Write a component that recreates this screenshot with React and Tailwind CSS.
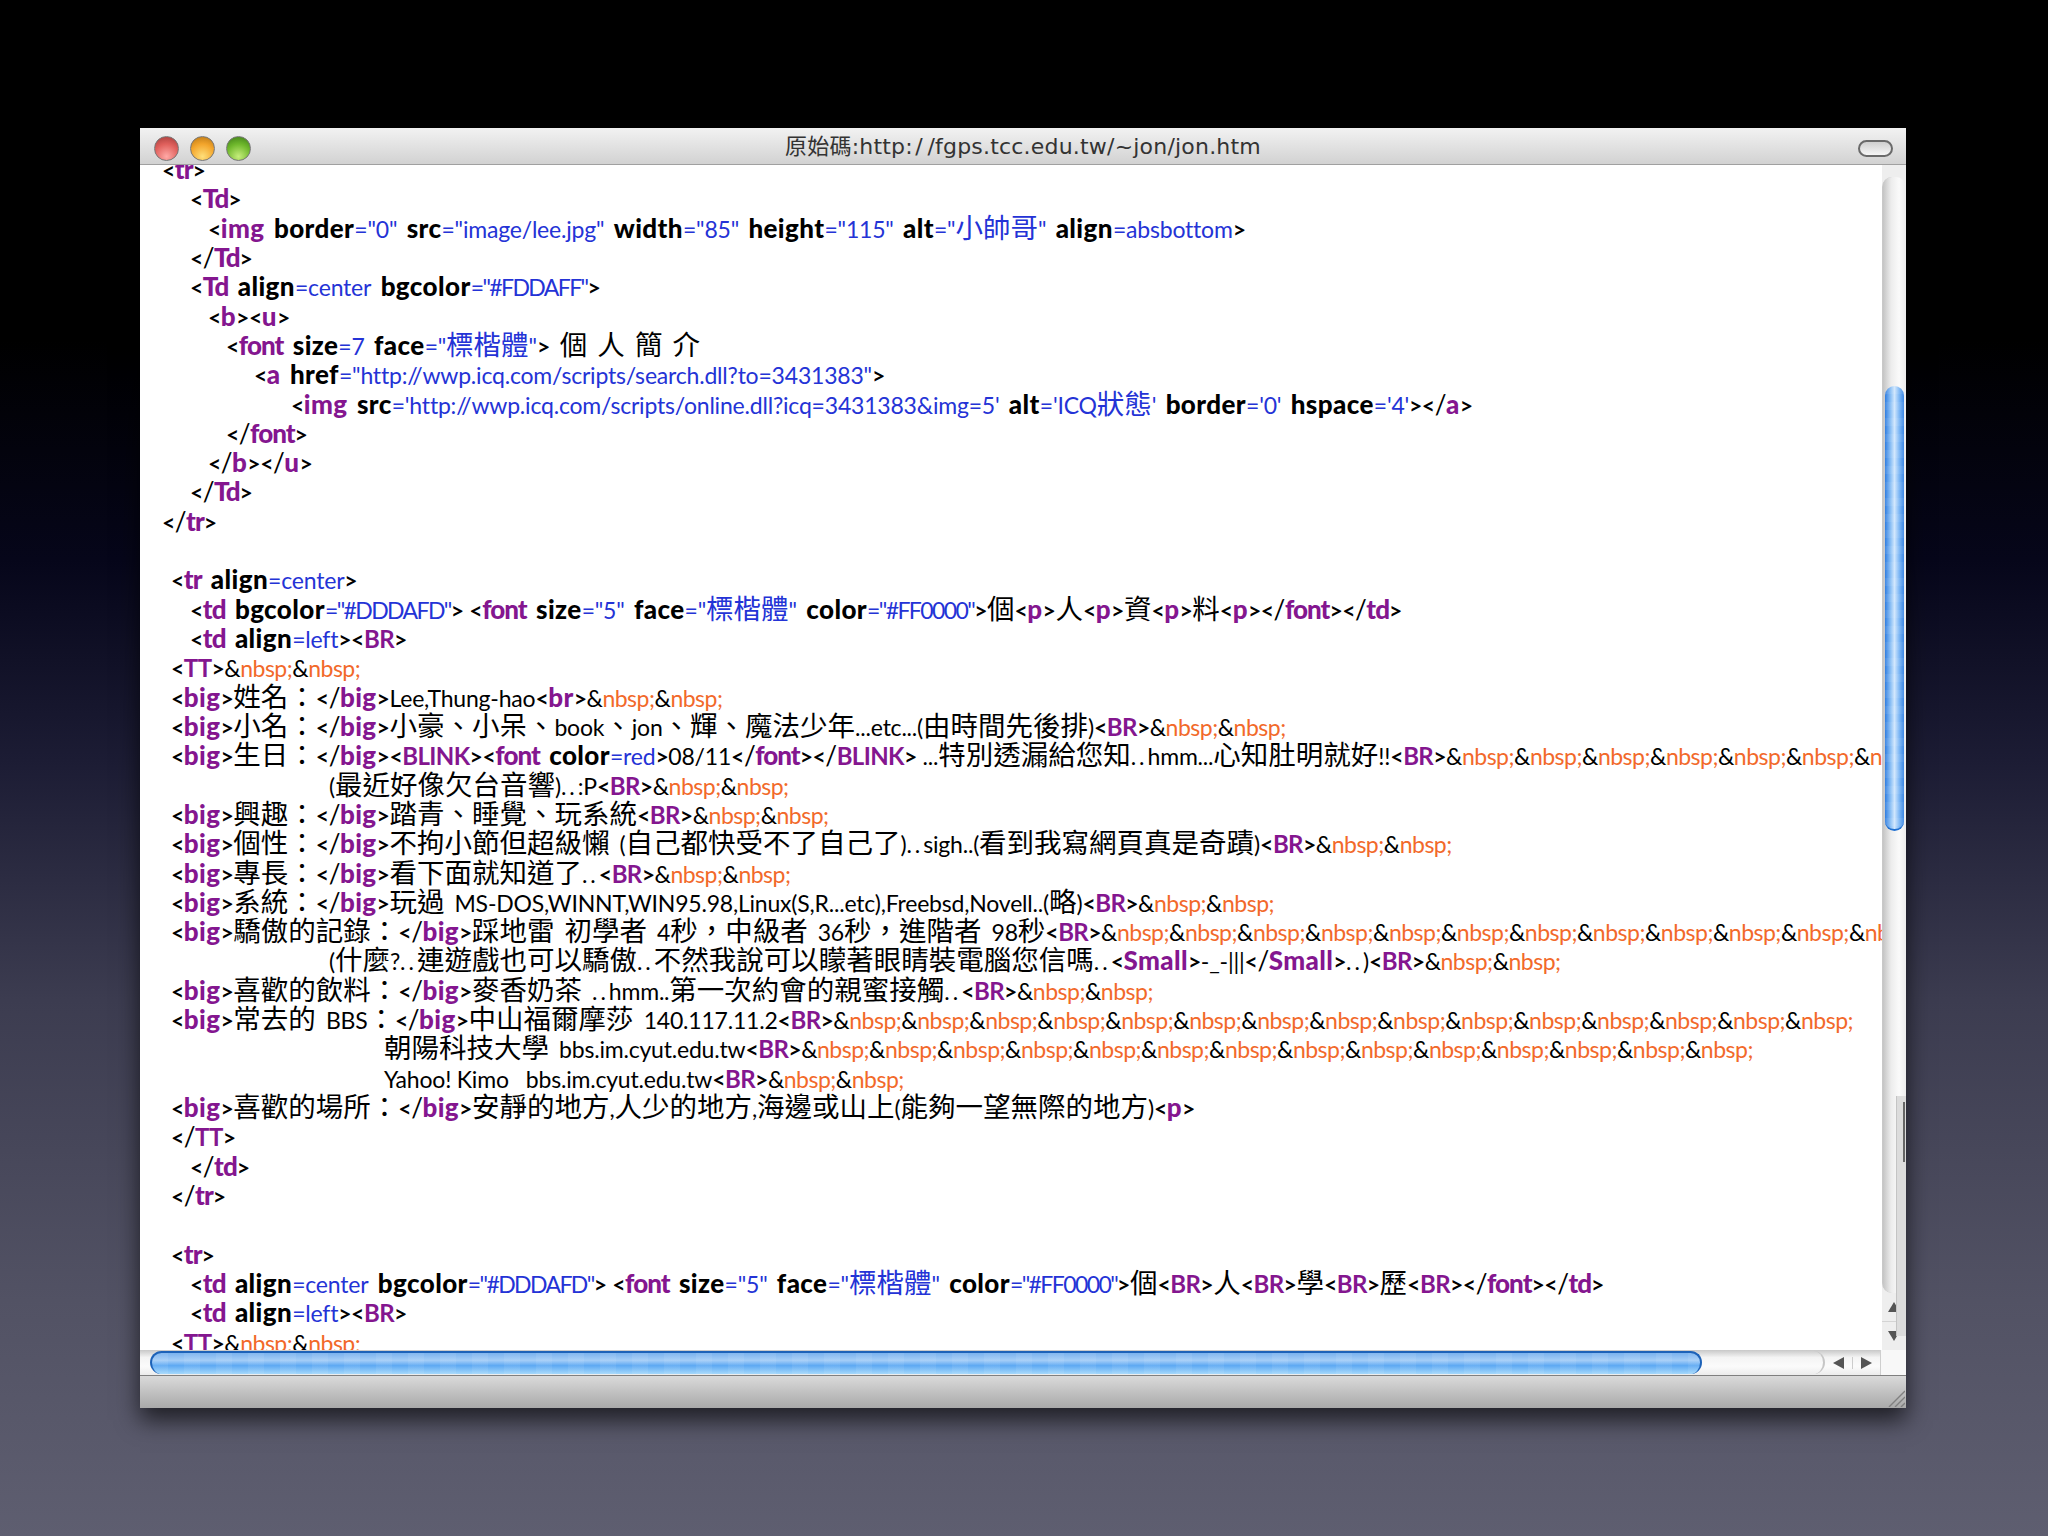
import React from 'react';

// view-source listing; the highlighter below colours it like the browser does
const SOURCE = [
  [22, '<tr>'],
  [50, '<Td>'],
  [68, '<img border="0" src="image/lee.jpg" width="85" height="115" alt="小帥哥" align=absbottom>'],
  [50, '</Td>'],
  [50, '<Td align=center bgcolor="#FDDAFF">'],
  [68, '<b><u>'],
  [86, '<font size=7 face="標楷體"> 個 人 簡 介'],
  [114, '<a href="http://wwp.icq.com/scripts/search.dll?to=3431383">'],
  [151, "<img src='http://wwp.icq.com/scripts/online.dll?icq=3431383&img=5' alt='ICQ狀態' border='0' hspace='4'></a>"],
  [86, '</font>'],
  [68, '</b></u>'],
  [50, '</Td>'],
  [22, '</tr>'],
  [0, ''],
  [31, '<tr align=center>'],
  [50, '<td bgcolor="#DDDAFD"> <font size="5" face="標楷體" color="#FF0000">個<p>人<p>資<p>料<p></font></td>'],
  [50, '<td align=left><BR>'],
  [31, '<TT>&nbsp;&nbsp;'],
  [31, '<big>姓名：</big>Lee,Thung-hao<br>&nbsp;&nbsp;'],
  [31, '<big>小名：</big>小豪、小呆、book、jon、輝、魔法少年...etc...(由時間先後排)<BR>&nbsp;&nbsp;'],
  [31, '<big>生日：</big><BLINK><font color=red>08/11</font></BLINK> ...特別透漏給您知..hmm...心知肚明就好!!<BR>&nbsp;&nbsp;&nbsp;&nbsp;&nbsp;&nbsp;&nbsp;&nbsp;'],
  [189, '(最近好像欠台音響)..:P<BR>&nbsp;&nbsp;'],
  [31, '<big>興趣：</big>踏青、睡覺、玩系統<BR>&nbsp;&nbsp;'],
  [31, '<big>個性：</big>不拘小節但超級懶 (自己都快受不了自己了)..sigh..(看到我寫網頁真是奇蹟)<BR>&nbsp;&nbsp;'],
  [31, '<big>專長：</big>看下面就知道了..<BR>&nbsp;&nbsp;'],
  [31, '<big>系統：</big>玩過 MS-DOS,WINNT,WIN95.98,Linux(S,R...etc),Freebsd,Novell..(略)<BR>&nbsp;&nbsp;'],
  [31, '<big>驕傲的記錄：</big>踩地雷 初學者 4秒，中級者 36秒，進階者 98秒<BR>&nbsp;&nbsp;&nbsp;&nbsp;&nbsp;&nbsp;&nbsp;&nbsp;&nbsp;&nbsp;&nbsp;&nbsp;&nbsp;&nbsp;'],
  [189, '(什麼?..連遊戲也可以驕傲..不然我說可以矇著眼睛裝電腦您信嗎..<Small>-_-|||</Small>..)<BR>&nbsp;&nbsp;'],
  [31, '<big>喜歡的飲料：</big>麥香奶茶 ..hmm..第一次約會的親蜜接觸..<BR>&nbsp;&nbsp;'],
  [31, '<big>常去的 BBS：</big>中山福爾摩莎 140.117.11.2<BR>&nbsp;&nbsp;&nbsp;&nbsp;&nbsp;&nbsp;&nbsp;&nbsp;&nbsp;&nbsp;&nbsp;&nbsp;&nbsp;&nbsp;&nbsp;'],
  [244, '朝陽科技大學 bbs.im.cyut.edu.tw<BR>&nbsp;&nbsp;&nbsp;&nbsp;&nbsp;&nbsp;&nbsp;&nbsp;&nbsp;&nbsp;&nbsp;&nbsp;&nbsp;&nbsp;'],
  [244, 'Yahoo! Kimo   bbs.im.cyut.edu.tw<BR>&nbsp;&nbsp;'],
  [31, '<big>喜歡的場所：</big>安靜的地方,人少的地方,海邊或山上(能夠一望無際的地方)<p>'],
  [31, '</TT>'],
  [50, '</td>'],
  [31, '</tr>'],
  [0, ''],
  [31, '<tr>'],
  [50, '<td align=center bgcolor="#DDDAFD"> <font size="5" face="標楷體" color="#FF0000">個<BR>人<BR>學<BR>歷<BR></font></td>'],
  [50, '<td align=left><BR>'],
  [31, '<TT>&nbsp;&nbsp;'],
];

const HAN = '\\u2E80-\\u9FFF\\uF900-\\uFAFF\\uFF00-\\uFF60\\u3000-\\u303F';
const CJK = new RegExp(`( ?[${HAN}]+(?: [${HAN}]+)* ?)`);
const DOTS = /((?<![A-Za-z.])\.\.(?!\.))/;

const Latin = ({ text }) =>
  text.split(DOTS).map((part, i) =>
    i % 2 ? <span key={i} className="tracking-[3px]">{part}</span> : part
  );

const Run = ({ text, className = '' }) => (
  <span className={`tracking-[-0.2px] ${className}`}>
    {text.split(CJK).map((part, i) =>
      i % 2
        ? <span key={i} className="text-[27.5px] leading-[0] font-normal tracking-normal [word-spacing:3px]">{part}</span>
        : <Latin key={i} text={part} />
    )}
  </span>
);

// the listing's face has narrow capitals and narrow t, r and f
const nameStyle = (text) => {
  if (/^[A-Z]+$/.test(text)) return 'text-[24px] font-bold tracking-[-0.6px]';
  if (/^(tr|td|Td|font)$/.test(text)) return 'text-[26px] font-black tracking-[-1px]';
  return 'text-[26px] font-black tracking-[0.4px]';
};

const Name = ({ text, className = '' }) => (
  <span className={`leading-[0] ${nameStyle(text)} ${className}`}>{text}</span>
);

const Tag = ({ src }) => {
  const m = src.match(/^<(\/?)([a-zA-Z]+)([^>]*)>$/);
  const attrs = [...m[3].matchAll(/(\s+)([a-zA-Z]+)=("[^"]*"|'[^']*'|[^\s]+)/g)];
  return (
    <>
      <span className="font-bold">&lt;</span>
      {m[1] && <span className="text-[26px] leading-[0]">{m[1]}</span>}
      <Name text={m[2]} className="text-[#84168f]" />
      {attrs.map((a, i) => (
        <React.Fragment key={i}>
          <span className="[word-spacing:4px]">{a[1]}</span>
          <Name text={a[2]} />
          {a[3].includes('#')
            ? <span className="text-[#2433d6] tracking-[-1.6px]">{'=' + a[3]}</span>
            : <Run text={'=' + a[3]} className="text-[#2433d6]" />}
        </React.Fragment>
      ))}
      <span className="font-bold">&gt;</span>
    </>
  );
};

const Line = ({ indent, src }) => {
  const tokens = src.match(/<\/?[a-zA-Z]+[^>]*>|&nbsp;|[^<&]+/g) || [];
  return (
    <div className="h-[29.32px] leading-[29.32px] whitespace-pre" style={{ paddingLeft: indent }}>
      {tokens.map((t, i) => {
        if (t === '&nbsp;') return <React.Fragment key={i}>&amp;<span className="text-[#f2692a]">nbsp;</span></React.Fragment>;
        if (t[0] === '<') return <Tag key={i} src={t} />;
        return <Run key={i} text={t} />;
      })}
    </div>
  );
};

const TrafficLight = ({ className }) => (
  <span className={`w-[25px] h-[25px] rounded-full border border-[#777777] ${className}`} />
);

const VerticalScrollbar = () => (
  <div className="relative w-[24px] flex flex-col bg-[#eeeeee]">
    <div className="h-[12px] shrink-0" />
    <div className="flex-1 min-h-0 rounded-[10px] border-l border-[#c8c8c8] bg-[linear-gradient(to_right,#c4c4c4,#ececec_35%,#fafafa_70%,#ececec)]">
      <div className="h-[445px] mt-[209px] mx-[2px] rounded-[10px] border-b-2 border-[#1f6fd0] bg-[repeating-linear-gradient(to_bottom,rgba(255,255,255,0.07)_0,rgba(255,255,255,0.07)_8px,rgba(255,255,255,0)_8px,rgba(255,255,255,0)_16px),linear-gradient(to_right,#2f7de0,#8cc0f5_30%,#cfe6fd_50%,#7db7f5_75%,#3a86e4)]" />
    </div>
    <div className="h-[57px] shrink-0 flex flex-col">
      <div className="flex-1 flex items-center justify-center text-[#555555]">
        <svg width="12" height="10" viewBox="0 0 12 10"><path d="M6 0L12 10H0Z" fill="currentColor" /></svg>
      </div>
      <div className="flex-1 flex items-center justify-center border-t border-[#d4d4d4] text-[#555555]">
        <svg width="12" height="10" viewBox="0 0 12 10"><path d="M0 0H12L6 10Z" fill="currentColor" /></svg>
      </div>
    </div>
    <div className="absolute right-0 top-[931px] w-[10px] h-[240px] bg-[#dcdcdc] border-l border-[#c4c4c4]">
      <div className="absolute right-[1px] top-[6px] w-[2px] h-[60px] bg-[#666666]" />
    </div>
  </div>
);

const HorizontalScrollbar = () => (
  <div className="h-[26px] shrink-0 flex items-stretch bg-[#f4f4f4] border-b border-[#808080]">
    <div className="w-[1740px] relative flex bg-[linear-gradient(to_bottom,#c8c8c8,#f4f4f4_30%,#fbfbfb_65%,#ececec)]">
      <div className="ml-[10px] w-[1552px] my-[1px] rounded-full border-t-2 border-x-2 border-[#1d62b8] bg-[repeating-linear-gradient(to_right,rgba(255,255,255,0.07)_0,rgba(255,255,255,0.07)_16px,rgba(255,255,255,0)_16px,rgba(255,255,255,0)_32px),linear-gradient(to_bottom,#7ab2ee,#a4cdf7_35%,#5ea9f3_60%,#a4d8fb)]" />
      <div className="w-[123px] my-[1px] rounded-r-[12px] border-r-2 border-[#c6c6c6]" />
      <div className="flex-1 flex items-center text-[#555555]">
        <div className="flex-1 flex justify-center border-r border-[#cccccc]">
          <svg width="11" height="12" viewBox="0 0 11 12"><path d="M0 6L11 0V12Z" fill="currentColor" /></svg>
        </div>
        <div className="flex-1 flex justify-center">
          <svg width="11" height="12" viewBox="0 0 11 12"><path d="M0 0L11 6L0 12Z" fill="currentColor" /></svg>
        </div>
      </div>
    </div>
    <div className="flex-1 bg-[#f8f8f8] border-l border-[#cfcfcf]" />
  </div>
);

export default function App() {
  return (
    <div className="w-[2048px] h-[1536px] overflow-hidden pt-[128px] pl-[140px] bg-[linear-gradient(to_bottom,#000000_0,#000000_340px,#06061a_560px,#1c1c34_760px,#3c3c50_1000px,#525264_1300px,#5e5e70_1536px)]">
      <div className="w-[1766px] h-[1280px] flex flex-col shadow-[0_12px_22px_rgba(0,0,0,0.65)] bg-white">
        <div className="h-[37px] shrink-0 relative flex items-center justify-center border-b border-[#a0a0a0] bg-[linear-gradient(to_bottom,#f2f2f2,#d2d2d2)]">
          <div className="absolute left-[14px] top-[8px] flex gap-[11px]">
            <TrafficLight className="bg-[radial-gradient(circle_at_50%_85%,#ffa9a6,#e0605c_55%,#a03a38)]" />
            <TrafficLight className="bg-[radial-gradient(circle_at_50%_85%,#ffdf7a,#f3a52c_55%,#b67413)]" />
            <TrafficLight className="bg-[radial-gradient(circle_at_50%_85%,#c6ee7c,#6fb82c_55%,#3b7a18)]" />
          </div>
          <span className="pt-[1px] font-['DejaVu_Sans','Noto_Sans_CJK_TC',sans-serif] text-[22px] tracking-[0.2px] text-[#333333]">{'原始碼:http:\u200a/\u2009/fgps.tcc.edu.tw/~jon/jon.htm'}</span>
          <span className="absolute right-[13px] top-[12px] w-[35px] h-[17px] rounded-full border-2 border-[#6a6a6a] bg-[linear-gradient(to_bottom,#cfcfcf,#f6f6f6)]" />
        </div>
        <div className="flex-1 min-h-0 flex">
          <div className="flex-1 min-w-0 overflow-hidden">
            <div className="-mt-[9px] font-['Lato','Noto_Sans_CJK_TC',sans-serif] text-[23px] tracking-[-0.5px] text-black">
              {SOURCE.map(([indent, src], i) => <Line key={i} indent={indent} src={src} />)}
            </div>
          </div>
          <VerticalScrollbar />
        </div>
        <HorizontalScrollbar />
        <div className="h-[32px] shrink-0 relative bg-[linear-gradient(to_bottom,#dadada,#a9a9a9)]">
          <svg className="absolute right-[1px] bottom-[1px]" width="18" height="18" viewBox="0 0 18 18" stroke="#808080" strokeWidth="1.4">
            <path d="M2 18L18 2M8 18L18 8M14 18L18 14" />
          </svg>
        </div>
      </div>
    </div>
  );
}
